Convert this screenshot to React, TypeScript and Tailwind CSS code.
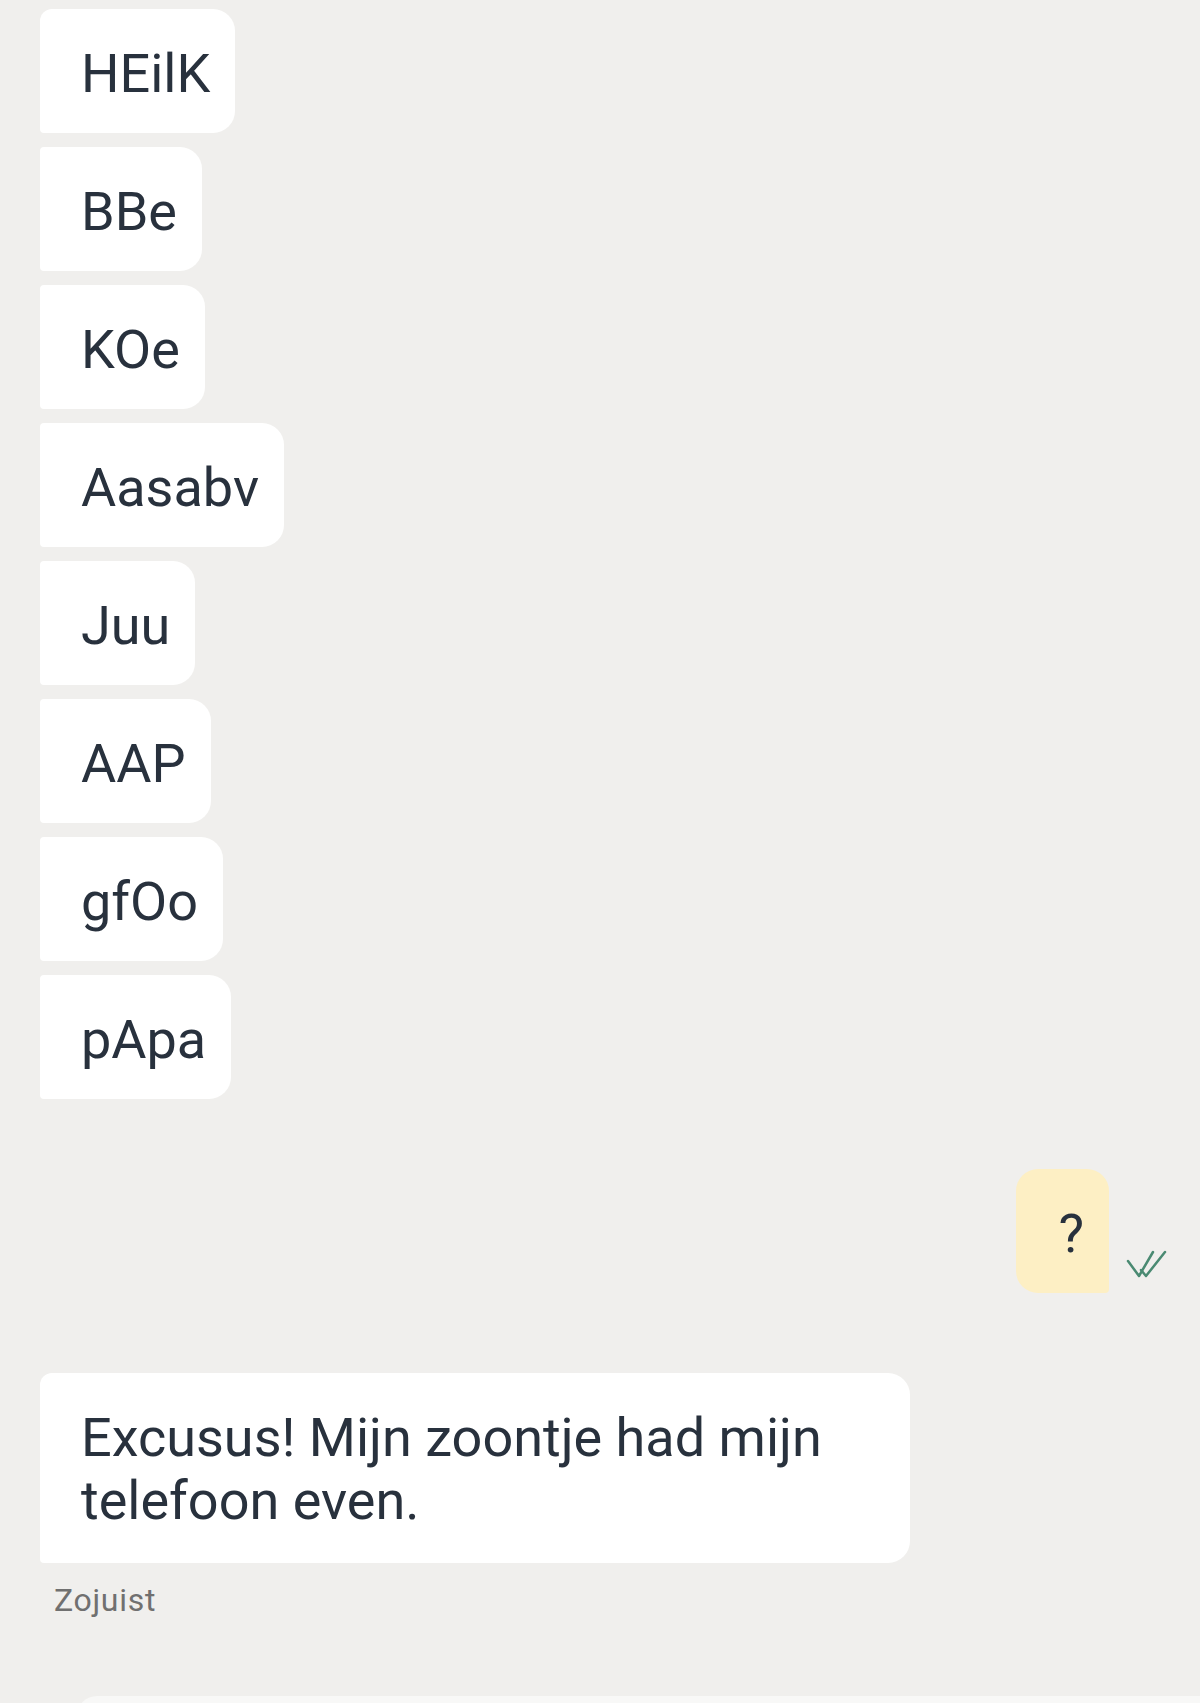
const incoming = ['HEilK', 'BBe', 'KOe', 'Aasabv', 'Juu', 'AAP', 'gfOo', 'pApa'];

const DoubleCheck = () => (
    <svg width="42" height="30" viewBox="0 0 42 30" fill="none" stroke="#4a8a72" strokeWidth="2.5" strokeLinecap="round" strokeLinejoin="round">
        <path d="M2 12 L13 27 L27 3" />
        <path d="M15 21 L20 27 L39 3" />
    </svg>
);

const App = () => {
    return (
        <div className="min-h-[1703px] bg-[#f0efed] overflow-hidden font-['Roboto','Liberation_Sans',sans-serif] text-[#28313d]">
            {/* incoming stack */}
            <div className="flex flex-col items-start gap-[14px] pt-[9px] pl-[40px]">
                {incoming.map((m, i) => (
                    <div
                        key={m}
                        className={`bg-white pl-[41px] pr-[25px] pt-[33px] pb-[28px] text-[54px] leading-[63px] rounded-r-[22px] ${i === 0 ? 'rounded-tl-[12px] rounded-bl-[4px]' : 'rounded-l-[4px]'}`}
                    >
                        {m}
                    </div>
                ))}
            </div>

            {/* outgoing */}
            <div className="flex justify-end items-end mt-[70px] pr-[32px] gap-[17px]">
                <div className="bg-[#fdefc4] pl-[42px] pr-[25px] pt-[33px] pb-[28px] text-[54px] leading-[63px] rounded-l-[22px] rounded-tr-[22px] rounded-br-[4px]">
                    ?
                </div>
                <div className="mb-[14px]">
                    <DoubleCheck />
                </div>
            </div>

            {/* last incoming */}
            <div className="pl-[40px] mt-[80px]">
                <div className="max-w-[870px] bg-white pl-[41px] pr-[25px] pt-[33px] pb-[31px] text-[54px] leading-[63px] rounded-tl-[12px] rounded-bl-[4px] rounded-r-[22px]">
                    Excusus! Mijn zoontje had mijn telefoon even.
                </div>
                <div className="mt-[19px] pl-[14px] text-[32px] leading-[36px] tracking-[0.7px] text-[#707070]">Zojuist</div>
            </div>

            {/* input bar, cut off at the bottom */}
            <div className="ml-[77px] mt-[78px] h-[60px] bg-[#f8f8f7] rounded-tl-[20px]" />
        </div>
    );
};

export default App;
